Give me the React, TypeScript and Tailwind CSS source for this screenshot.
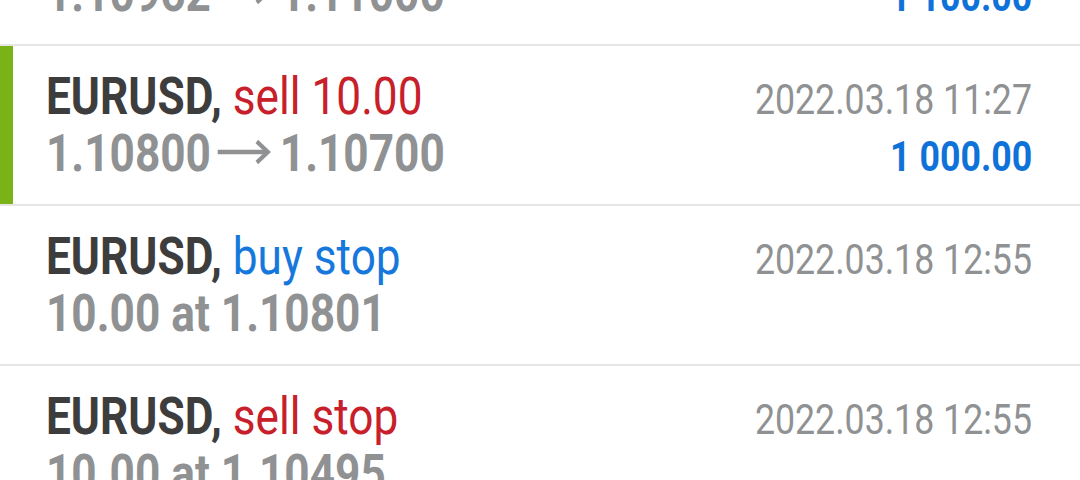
import React from "react";

type Row = {
  side: string;
  sideColor: "red" | "blue";
  line2: React.ReactNode;
  date: string;
  amount?: string;
  active?: boolean;
};

const Arrow = () => (
  <svg
    width="64"
    height="26"
    viewBox="0 0 64 26"
    className="inline-block ml-[7px] mr-[10px] align-[6px]"
    fill="none"
    stroke="#8f9193"
    strokeWidth="4.6"
    strokeLinecap="butt"
    strokeLinejoin="miter"
  >
    <line x1="1" y1="13" x2="59" y2="13" />
    <polyline points="47,2.5 60,13 47,23.5" />
  </svg>
);

const rows: Row[] = [
  {
    side: "buy 10.00",
    sideColor: "blue",
    line2: (
      <>
        1.10962
        <Arrow />
        1.11000
      </>
    ),
    date: "2022.03.18 10:40",
    amount: "1 100.00",
  },
  {
    side: "sell 10.00",
    sideColor: "red",
    line2: (
      <>
        1.10800
        <Arrow />
        1.10700
      </>
    ),
    date: "2022.03.18 11:27",
    amount: "1 000.00",
    active: true,
  },
  {
    side: "buy stop",
    sideColor: "blue",
    line2: <>10.00 at 1.10801</>,
    date: "2022.03.18 12:55",
  },
  {
    side: "sell stop",
    sideColor: "red",
    line2: <>10.00 at 1.10495</>,
    date: "2022.03.18 12:55",
  },
];

export default function App() {
  return (
    <div
      className="w-[1080px] h-[480px] overflow-hidden bg-white"
      style={{ fontFamily: "Roboto, 'Noto Sans', sans-serif" }}
    >
      <div className="mt-[-114px] flex flex-col">
        {rows.map((r, i) => (
          <div key={i} className="border-b-2 border-[#e6e6e6]">
            <div className="flex h-[158px]">
              <div
                className={
                  r.active ? "w-[13px] shrink-0 bg-[#7ab317]" : "w-[13px] shrink-0"
                }
              />
              <div className="flex-1 flex flex-col pt-[22px] pl-[33px] pr-[48px]">
                <div className="flex items-baseline justify-between h-[57px] leading-[57px]">
                  <span className="inline-block origin-left scale-x-[0.85] text-[52px] whitespace-nowrap">
                    <span className="font-bold text-[#3d3d3d]">EURUSD,</span>{" "}
                    <span
                      className={
                        r.sideColor === "red" ? "text-[#c8202a]" : "text-[#1677dc]"
                      }
                    >
                      {r.side}
                    </span>
                  </span>
                  <span className="inline-block origin-right scale-x-[0.85] text-[42px] text-[#8f9193] whitespace-nowrap">
                    {r.date}
                  </span>
                </div>
                <div className="flex items-baseline justify-between h-[57px] leading-[57px]">
                  <span className="inline-block origin-left scale-x-[0.85] text-[52px] font-bold text-[#8f9193] whitespace-nowrap">
                    {r.line2}
                  </span>
                  {r.amount ? (
                    <span className="inline-block origin-right scale-x-[0.85] text-[42px] font-bold text-[#0f72d9] whitespace-nowrap">
                      {r.amount}
                    </span>
                  ) : (
                    <span />
                  )}
                </div>
              </div>
            </div>
          </div>
        ))}
      </div>
    </div>
  );
}
